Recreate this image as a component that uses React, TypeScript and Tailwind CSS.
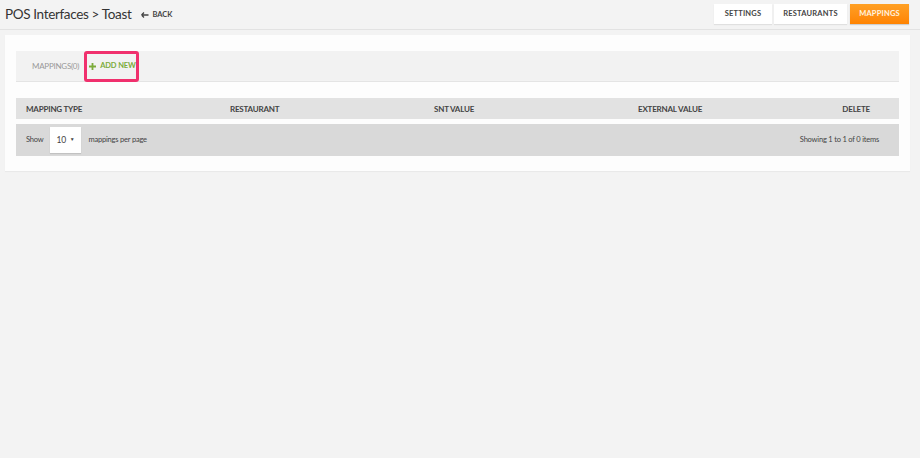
import React from "react";

export default function App() {
  const font = { fontFamily: "Lato, 'Noto Sans', sans-serif" };
  return (
    <div className="min-h-[458px] w-[920px] bg-[#f3f3f3] text-[#333]" style={font}>
      <div className="flex h-[30px] items-center justify-between border-b border-[#e2e2e2] pl-[5px] pr-[11px]">
        <div className="flex items-center">
          <span className="text-[13.5px] leading-none tracking-[-0.35px] text-[#333]">POS Interfaces &gt; Toast</span>
          <span className="ml-[10px] flex items-center text-[7.5px] font-bold text-[#444]">
            <svg width="8" height="6" viewBox="0 0 8 6" className="mr-[3px]">
              <path d="M0.5 3 L3 0.5 M0.5 3 L3 5.5 M0.5 3 H7.5" stroke="#444" strokeWidth="1.3" fill="none" />
            </svg>
            BACK
          </span>
        </div>
        <div className="flex items-start gap-[2px] self-start pt-[4px]">
          <button className="h-[20px] w-[58px] bg-white text-[7.5px] font-bold tracking-[0.2px] text-[#444] shadow-[0_1px_1px_rgba(0,0,0,0.08)]">SETTINGS</button>
          <button className="h-[20px] w-[73px] bg-white text-[7.5px] font-bold tracking-[0.2px] text-[#444] shadow-[0_1px_1px_rgba(0,0,0,0.08)]">RESTAURANTS</button>
          <button className="ml-[1px] h-[20px] w-[59px] bg-gradient-to-b from-[#ffa023] to-[#ff8300] text-[7.5px] font-bold tracking-[0.2px] text-[#fff4e0] shadow-[0_1px_1px_rgba(0,0,0,0.15)]">MAPPINGS</button>
        </div>
      </div>

      <div className="mx-[5px] mt-[5px] w-[905px] bg-[#fdfdfd] px-[11px] pb-[15px] pt-[16px] shadow-[0_1px_1px_rgba(0,0,0,0.04)]">
        <div className="flex h-[31px] items-center border-b border-[#e4e4e4] bg-[#f2f2f2] pl-[16px]">
          <span className="text-[8px] tracking-[-0.25px] text-[#999]">MAPPINGS(0)</span>
          <div className="ml-[5px] flex h-[31px] w-[55px] items-center rounded-[3px] border-[3px] border-[#f0306d] pl-[2px]">
            <svg width="7" height="7" viewBox="0 0 7 7">
              <path d="M3.5 0 V7 M0 3.5 H7" stroke="#7cab3a" strokeWidth="1.8" fill="none" />
            </svg>
            <span className="ml-[4px] text-[7.5px] font-bold tracking-[-0.1px] text-[#7cab3a]">ADD NEW</span>
          </div>
        </div>

        <div className="mt-[16px] grid h-[21px] grid-cols-[204px_204px_204px_204px_1fr] items-center bg-[#e2e2e2] text-[8px] font-bold tracking-[-0.2px] text-[#444]">
          <span className="pl-[10px]">MAPPING TYPE</span>
          <span className="pl-[10px]">RESTAURANT</span>
          <span className="pl-[10px]">SNT VALUE</span>
          <span className="pl-[10px]">EXTERNAL VALUE</span>
          <span className="pr-[29px] text-right">DELETE</span>
        </div>

        <div className="mt-[5px] flex h-[32px] items-center justify-between bg-[#d9d9d9] pl-[10px] pr-[20px] text-[7.5px] tracking-[-0.2px] text-[#444]">
          <div className="flex items-center">
            <span>Show</span>
            <div className="ml-[7px] flex h-[26px] w-[31px] items-center justify-between bg-white pl-[6px] pr-[7px] shadow-[0_1px_1px_rgba(0,0,0,0.1)]">
              <span className="text-[8.5px]">10</span>
              <span className="text-[5px]">▼</span>
            </div>
            <span className="ml-[7px]">mappings per page</span>
          </div>
          <span>Showing 1 to 1 of 0 items</span>
        </div>
      </div>
    </div>
  );
}
